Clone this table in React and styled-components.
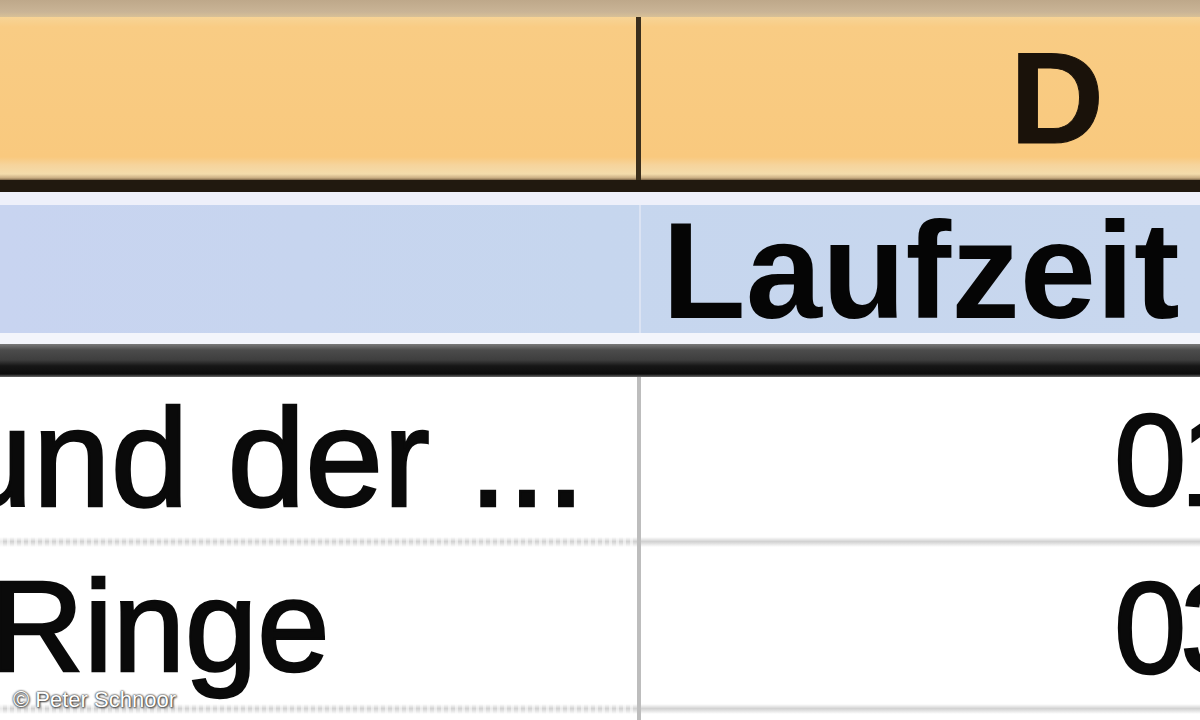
import React from "react";
import styled, { createGlobalStyle } from "styled-components";

const GlobalStyle = createGlobalStyle`
  html, body {
    margin: 0;
    padding: 0;
    background: #ffffff;
    overflow: hidden;
  }
  body {
    font-family: "Liberation Sans", Arial, sans-serif;
  }
`;

const FIRST_COL = 641;
const SECOND_COL = 832;

const Sheet = styled.div`
  position: relative;
  width: 1200px;
  height: 720px;
  overflow: hidden;
  display: flex;
  flex-direction: column;
  background: #ffffff;
`;

const TopStrip = styled.div`
  flex: 0 0 17px;
  background: linear-gradient(to bottom, #bea88a 0%, #c9b496 70%, #d8c197 100%);
`;

const HeaderRow = styled.div`
  flex: 0 0 163px;
  display: grid;
  grid-template-columns: ${FIRST_COL}px ${SECOND_COL}px;
  background: linear-gradient(
    to bottom,
    #f7d496 0px,
    #f9cc84 10px,
    #f9c97e 140px,
    #f6d49c 148px,
    #f4dcab 157px,
    #c9ad82 161px,
    #7a6446 163px
  );
`;

const HeaderCell = styled.div`
  box-sizing: border-box;
  border-right: ${(p) => (p.$divider ? "5px solid #3a2e1c" : "none")};
  text-align: ${(p) => p.$align || "left"};
  padding-top: 16px;
`;

const ColumnLetter = styled.span`
  display: inline-block;
  font-size: 130px;
  line-height: 1;
  font-weight: 700;
  color: #1a120a;
  -webkit-text-stroke: 1px #1a120a;
`;

const DarkRule = styled.div`
  flex: 0 0 12px;
  background: #21190f;
`;

const SubHeaderRow = styled.div`
  flex: 0 0 148px;
  box-sizing: border-box;
  display: grid;
  grid-template-columns: ${FIRST_COL}px ${SECOND_COL}px;
  border-top: 13px solid #eef0fa;
  border-bottom: 11px solid #f3f5fb;
  background: linear-gradient(to right, #c8d4f0 0%, #c6d6ee 50%, #c8d7ee 100%);
`;

const SubHeaderCell = styled.div`
  box-sizing: border-box;
  border-right: ${(p) => (p.$divider ? "2px solid #dbe3f3" : "none")};
  padding-left: ${(p) => p.$indent || 0}px;
  padding-top: 4px;
`;

const ColumnTitle = styled.span`
  display: inline-block;
  font-size: 137px;
  line-height: 124px;
  font-weight: 700;
  color: #050505;
  white-space: nowrap;
`;

const ThickRule = styled.div`
  flex: 0 0 33px;
  background: linear-gradient(
    to bottom,
    #7a7a7a 0px,
    #4c4c4c 6px,
    #3e3e3e 16px,
    #161616 22px,
    #0c0c0c 30px,
    #6a6a6a 33px
  );
`;

const DataRow = styled.div`
  flex: 0 0 ${(p) => p.$height}px;
  display: grid;
  grid-template-columns: ${FIRST_COL}px ${SECOND_COL}px;
`;

const DataCell = styled.div`
  box-sizing: border-box;
  border-right: ${(p) => (p.$divider ? "4px solid #bdbdbd" : "none")};
  padding-top: ${(p) => p.$top}px;
  padding-left: ${(p) => p.$indent || 0}px;
  overflow: hidden;
  white-space: nowrap;
`;

const CellText = styled.span`
  display: inline-block;
  margin-left: ${(p) => p.$shift || 0}px;
  font-size: ${(p) => p.$size}px;
  line-height: 1;
  color: #0a0a0a;
  -webkit-text-stroke: 2.5px #0a0a0a;
`;

const CellNumber = styled.span`
  display: inline-block;
  font-size: 130px;
  line-height: 1;
  letter-spacing: -6px;
  color: #0a0a0a;
  -webkit-text-stroke: 2.5px #0a0a0a;
`;

const RowDivider = styled.div`
  flex: 0 0 10px;
  display: grid;
  grid-template-columns: ${FIRST_COL}px ${SECOND_COL}px;
  background: linear-gradient(to bottom, #ffffff 0%, #d2d2d2 45%, #dcdcdc 60%, #ffffff 100%);
`;

const DividerCell = styled.div`
  box-sizing: border-box;
  border-right: ${(p) => (p.$divider ? "4px solid #bdbdbd" : "none")};
  background: ${(p) =>
    p.$dotted
      ? "repeating-linear-gradient(to right, rgba(255,255,255,0.55) 0 3px, rgba(255,255,255,0) 3px 7px)"
      : "none"};
`;

const Filler = styled.div`
  flex: 1 1 auto;
  display: grid;
  grid-template-columns: ${FIRST_COL}px ${SECOND_COL}px;
`;

const Credit = styled.div`
  position: absolute;
  left: 13px;
  bottom: 9px;
  font-size: 22px;
  line-height: 1;
  color: #ffffff;
  text-shadow: 0 0 2px #3a3a3a, 0 0 2px #3a3a3a, 1px 1px 2px #555555;
  white-space: nowrap;
`;

const rows = [
  { text: "und der ...", size: 140, shift: -45, top: 11, numTop: 18, value: "01:46:00", height: 160 },
  { text: "Ringe", size: 130, shift: -10, top: 14, numTop: 16, value: "03:21:00", height: 157 },
];

export default function App() {
  return (
    <>
      <GlobalStyle />
      <Sheet>
        <TopStrip />
        <HeaderRow>
          <HeaderCell $divider />
          <HeaderCell $align="center">
            <ColumnLetter>D</ColumnLetter>
          </HeaderCell>
        </HeaderRow>
        <DarkRule />
        <SubHeaderRow>
          <SubHeaderCell $divider />
          <SubHeaderCell $indent={21}>
            <ColumnTitle>Laufzeit</ColumnTitle>
          </SubHeaderCell>
        </SubHeaderRow>
        <ThickRule />
        {rows.map((r) => (
          <React.Fragment key={r.text}>
            <DataRow $height={r.height}>
              <DataCell $divider $top={r.top}>
                <CellText $size={r.size} $shift={r.shift}>
                  {r.text}
                </CellText>
              </DataCell>
              <DataCell $top={r.numTop} $indent={473}>
                <CellNumber>{r.value}</CellNumber>
              </DataCell>
            </DataRow>
            <RowDivider>
              <DividerCell $divider $dotted />
              <DividerCell />
            </RowDivider>
          </React.Fragment>
        ))}
        <Filler>
          <DataCell $divider $top={0} />
          <DataCell $top={0} />
        </Filler>
        <Credit>© Peter Schnoor</Credit>
      </Sheet>
    </>
  );
}
